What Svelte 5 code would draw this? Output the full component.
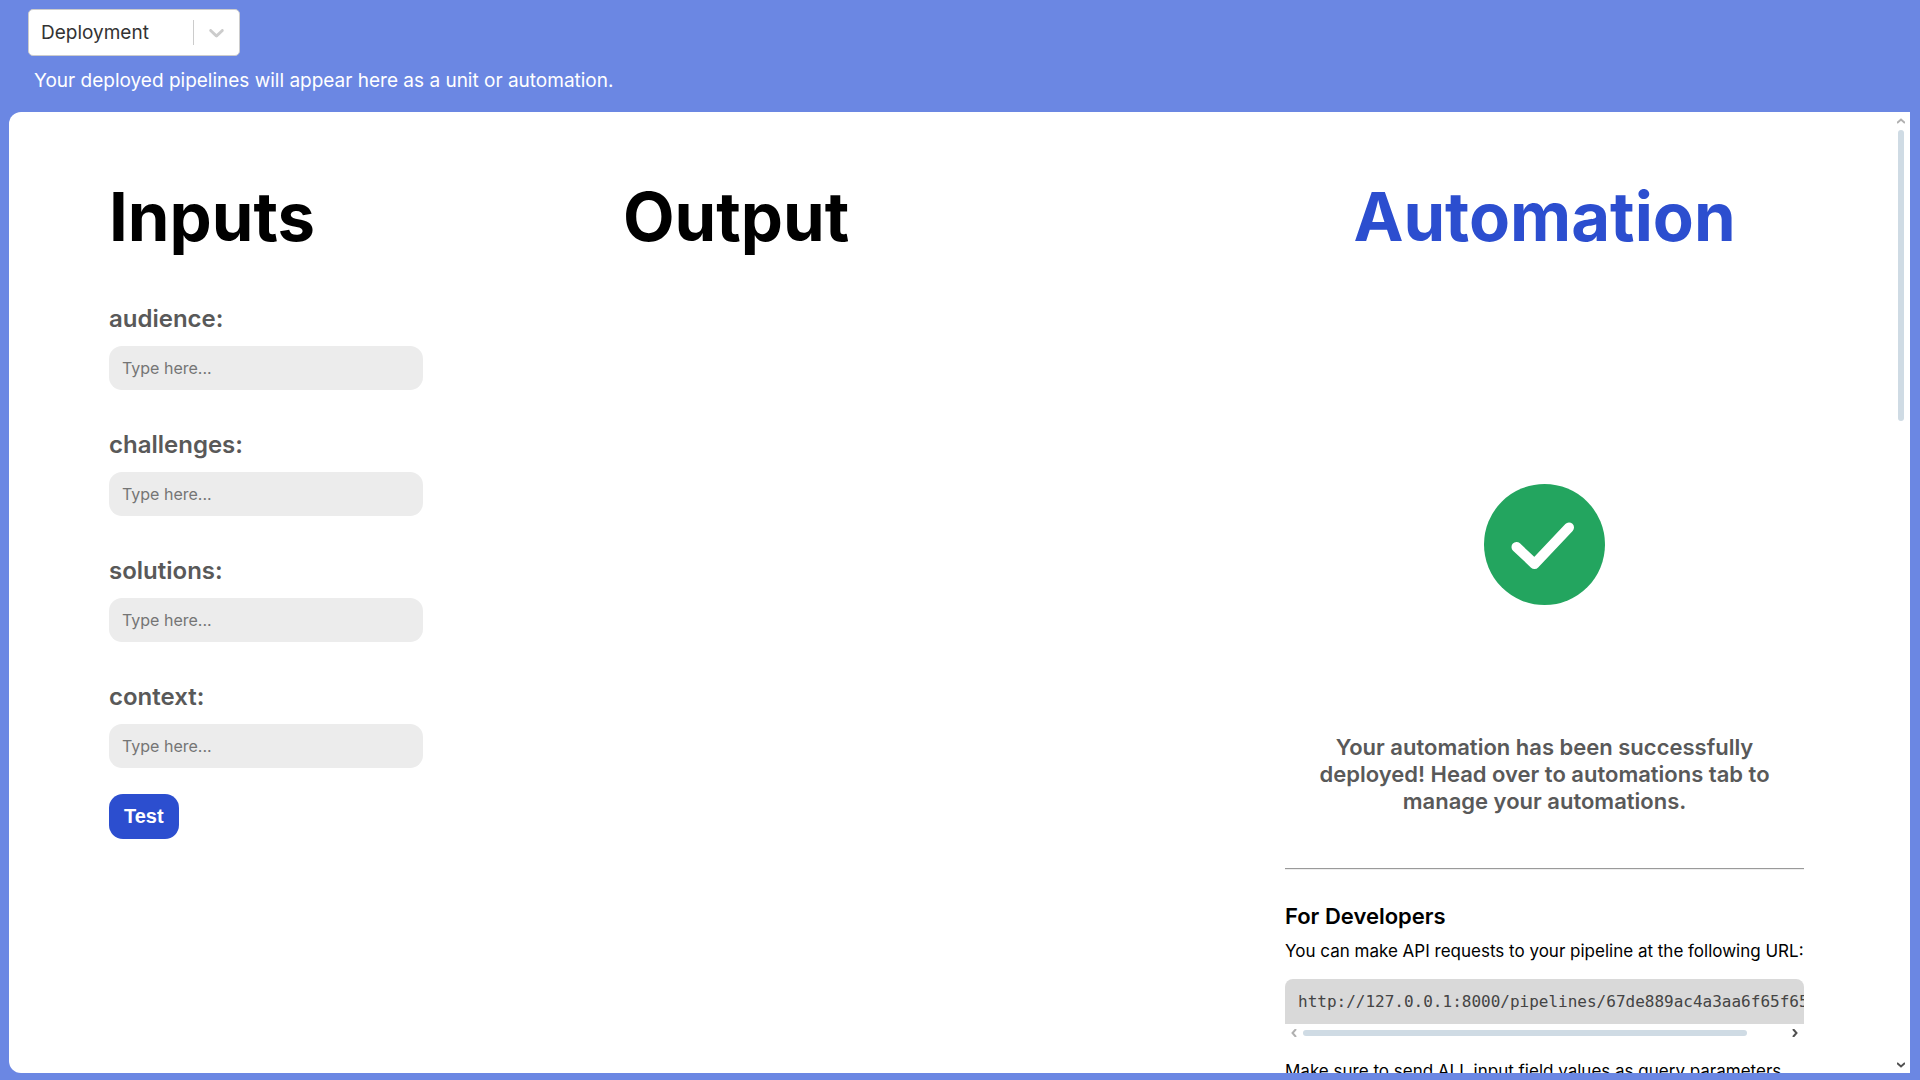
<script>
  const fields = ['audience', 'challenges', 'solutions', 'context'];
  const stages = ['Deployment'];
  let values = $state({ audience: '', challenges: '', solutions: '', context: '' });
  let stage = $state('Deployment');
</script>

<div class="page">
  <header class="top">
    <div class="picker">
      <select aria-label="Stage" bind:value={stage}>
        {#each stages as name}
          <option>{name}</option>
        {/each}
      </select>
      <span class="divider"></span>
      <svg class="caret" viewBox="0 0 20 20" aria-hidden="true">
        <path d="M4.516 7.548c0.436-0.446 1.043-0.481 1.576 0l3.908 3.747 3.908-3.747c0.533-0.481 1.141-0.446 1.574 0 0.436 0.445 0.408 1.197 0 1.615-0.406 0.418-4.695 4.502-4.695 4.502-0.217 0.223-0.502 0.335-0.787 0.335s-0.57-0.112-0.789-0.335c0 0-4.287-4.084-4.695-4.502s-0.436-1.17 0-1.615z" />
      </svg>
    </div>
    <p class="hint">Your deployed pipelines will appear here as a unit or automation.</p>
  </header>

  <main class="panel">
    <div class="content">
      <section class="inputs">
        <h1>Inputs</h1>
        <form onsubmit={(e) => e.preventDefault()}>
          {#each fields as field}
            <div class="field">
              <label for={field}>{field}:</label>
              <input id={field} type="text" placeholder="Type here..." bind:value={values[field]} />
            </div>
          {/each}
          <button class="test" type="submit">Test</button>
        </form>
      </section>

      <section>
        <h1>Output</h1>
      </section>

      <section class="automation">
        <h1>Automation</h1>
        <svg class="badge" viewBox="0 0 121 121" aria-hidden="true">
          <circle cx="60.5" cy="60.5" r="60.5" />
          <path d="M32.5 63L50.5 80L85 43.5" />
        </svg>
        <p class="message">
          Your automation has been successfully deployed! Head over to automations tab to manage your
          automations.
        </p>
        <hr />
        <h2>For Developers</h2>
        <p class="note">You can make API requests to your pipeline at the following URL:</p>
        <pre><code>http://127.0.0.1:8000/pipelines/67de889ac4a3aa6f65f65</code></pre>
        <div class="bar across" aria-hidden="true">
          <svg class="arrow" viewBox="0 0 8 8"><path d="M6 0L2.5 4L6 8" /></svg>
          <span class="track"><span class="thumb"></span></span>
          <svg class="arrow dark" viewBox="0 0 8 8"><path d="M2 0L5.5 4L2 8" /></svg>
        </div>
        <p class="note">Make sure to send ALL input field values as query parameters</p>
      </section>
    </div>
    <div class="bar down" aria-hidden="true">
      <svg class="arrow" viewBox="0 0 8 8"><path d="M0 6L4 2.5L8 6" /></svg>
      <span class="track"><span class="thumb"></span></span>
      <svg class="arrow dark" viewBox="0 0 8 8"><path d="M0 2L4 5.5L8 2" /></svg>
    </div>
  </main>
</div>

<style>
  :global(body) {
    margin: 0;
    background: #6b87e3;
  }

  .page {
    box-sizing: border-box;
    display: flex;
    flex-direction: column;
    height: 100vh;
    padding: 9px 10px 7px 9px;
    overflow: hidden;
    background: #6b87e3;
    color: #000;
    font-family: Inter, 'Liberation Sans', sans-serif;
    font-size: 17px;
  }

  h1,
  h2,
  p,
  pre {
    margin: 0;
  }

  .top {
    display: flex;
    flex-direction: column;
    align-items: flex-start;
    gap: 12px;
    height: 103px;
    flex: none;
    padding-left: 19px;
  }

  .picker {
    box-sizing: border-box;
    display: grid;
    grid-template-columns: 1fr 1px 45px;
    align-items: center;
    width: 212px;
    height: 47px;
    border: 1px solid #ccc;
    border-radius: 5px;
    background: #fff;
  }

  select {
    grid-area: 1 / 1 / 2 / 4;
    width: 100%;
    height: 100%;
    padding: 0 12px;
    border: 0;
    background: none;
    appearance: none;
    color: #333;
    font: 19px Inter, 'Liberation Sans', sans-serif;
  }

  .divider {
    grid-area: 1 / 2;
    height: 25px;
    background: #ccc;
    pointer-events: none;
  }

  .caret {
    grid-area: 1 / 3;
    justify-self: center;
    width: 25px;
    fill: #ccc;
    pointer-events: none;
  }

  .hint {
    padding-left: 6px;
    color: #fff;
    font-size: 19px;
    line-height: 26px;
  }

  .panel {
    display: flex;
    flex: 1;
    min-height: 0;
    overflow: hidden;
    border-radius: 12px 0 0 12px;
    background: #fff;
  }

  .content {
    display: grid;
    flex: 1;
    grid-template-columns: 514fr 662fr 519fr;
    align-items: start;
    padding: 64px 88px 0 100px;
  }

  section {
    min-width: 0;
  }

  h1 {
    font-size: 67px;
    line-height: 82px;
  }

  form {
    display: flex;
    flex-direction: column;
    align-items: flex-start;
    max-width: 314px;
    padding-top: 46px;
  }

  .field {
    display: flex;
    flex-direction: column;
    width: 100%;
    gap: 12px;
    margin-bottom: 40px;
  }

  .field:last-of-type {
    margin-bottom: 26px;
  }

  label {
    color: #595959;
    font-size: 24px;
    font-weight: 600;
    line-height: 30px;
  }

  input {
    box-sizing: border-box;
    width: 100%;
    height: 44px;
    padding: 0 13px;
    border: 0;
    border-radius: 13px;
    background: #ececec;
    font: 16px Inter, 'Liberation Sans', sans-serif;
  }

  input::placeholder {
    color: #757575;
  }

  .test {
    height: 45px;
    padding: 0 15px;
    border: 0;
    border-radius: 14px;
    background: #2c4ecf;
    color: #fff;
    font: bold 20px 'Liberation Sans', sans-serif;
  }

  .automation {
    display: flex;
    flex-direction: column;
  }

  .automation h1 {
    color: #2c4ecf;
    text-align: center;
  }

  .badge {
    align-self: center;
    width: 121px;
    margin: 226px 0 129px;
  }

  .badge circle {
    fill: #23a55f;
  }

  .badge path {
    fill: none;
    stroke: #fff;
    stroke-linecap: round;
    stroke-linejoin: round;
    stroke-width: 10;
  }

  .message {
    padding: 0 30px;
    color: #595959;
    font-size: 22px;
    font-weight: 600;
    line-height: 27px;
    text-align: center;
  }

  hr {
    width: 100%;
    box-sizing: border-box;
    margin: 53px 0 33px;
    border: 0;
    border-top: 1px solid #9a9a9a;
    border-bottom: 1px solid #eee;
  }

  h2 {
    font-size: 22px;
    font-weight: 600;
    line-height: 27px;
  }

  .note {
    padding-top: 10px;
    line-height: 22px;
    white-space: nowrap;
  }

  pre {
    margin-top: 17px;
    padding: 0 13px;
    overflow: hidden;
    border-radius: 8px 8px 0 0;
    background: #d9d9d9;
    color: #444;
    font: 16px/45px 'DejaVu Sans Mono', monospace;
  }

  code {
    font: inherit;
  }

  .bar {
    display: flex;
    align-items: center;
    flex: none;
  }

  .across {
    height: 18px;
    padding: 0 5px;
    gap: 5px;
    margin-bottom: 8px;
  }

  .down {
    flex-direction: column;
    width: 18px;
    padding: 5px 0 4px;
    gap: 5px;
  }

  .track {
    display: flex;
    flex: 1;
  }

  .down .track {
    flex-direction: column;
  }

  .thumb {
    width: 6px;
    height: 31.4%;
    border-radius: 3px;
    background: #cfdbe4;
  }

  .across .thumb {
    width: 92%;
    height: 6px;
  }

  .arrow {
    width: 8px;
    height: 8px;
    fill: none;
    stroke: #b0b0b0;
    stroke-width: 2;
  }

  .dark {
    stroke: #505050;
  }
</style>
